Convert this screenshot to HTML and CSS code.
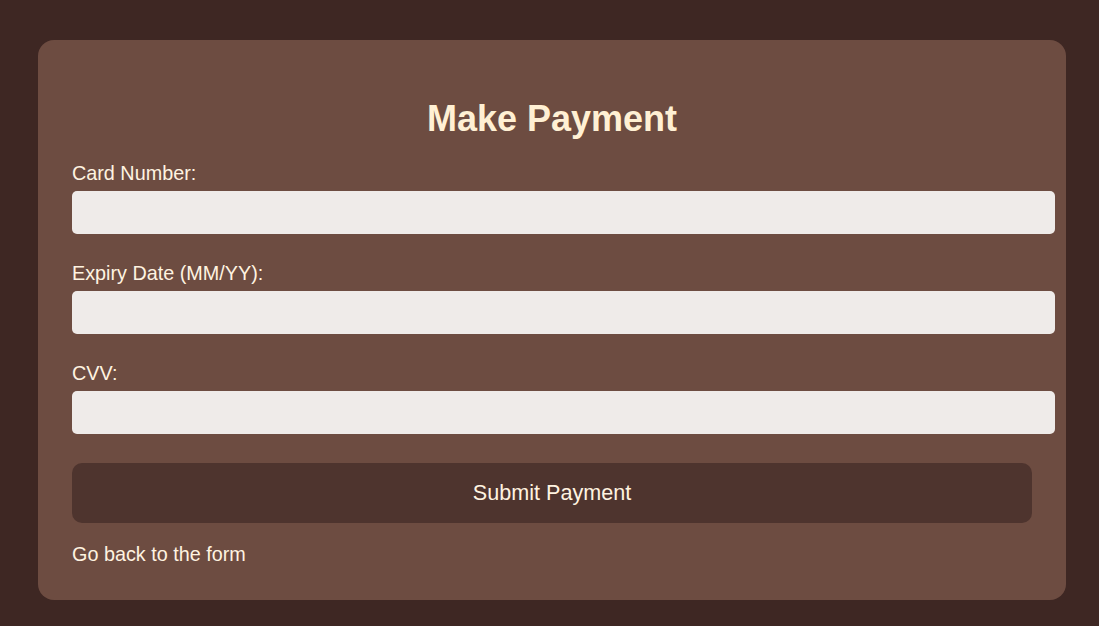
FILE: index.html
```html
<!DOCTYPE html>
<html lang="en">
<head>
<meta charset="utf-8">
<title>Make Payment</title>
<link rel="stylesheet" href="styles.css">
</head>
<body>
<main class="card">
  <h1 class="title">Make Payment</h1>
  <form class="form">
    <label class="label" for="card">Card Number:</label>
    <input class="input" id="card" type="text">
    <label class="label" for="expiry">Expiry Date (MM/YY):</label>
    <input class="input" id="expiry" type="text">
    <label class="label" for="cvv">CVV:</label>
    <input class="input" id="cvv" type="text">
    <button class="submit" type="submit">Submit Payment</button>
  </form>
  <a class="back" href="#">Go back to the form</a>
</main>
</body>
</html>
```
FILE: styles.css
```css
html, body {
  margin: 0;
  padding: 0;
  background: #3e2723;
  height: 100%;
}
body {
  font-family: "Liberation Sans", Arial, sans-serif;
  font-size: 18px;
  color: #fff3e0;
  padding-top: 40px;
  box-sizing: border-box;
}
.card {
  display: block;
  width: 960px;
  margin-left: 38px;
  padding: 34px;
  background: #6d4c41;
  border-radius: 16px;
}
.title {
  font-size: 36px;
  font-weight: bold;
  text-align: center;
  margin: 24px 0 23px;
  color: #fff0d4;
  line-height: 41px;
}
.form {
  display: flex;
  flex-direction: column;
  align-items: flex-start;
}
.label {
  font-size: 19.8px;
  line-height: 23px;
  margin-bottom: 6px;
}
.input {
  width: 960px;
  height: 21px;
  padding: 11px 12px 11px 11px;
  border: none;
  border-radius: 5px;
  background: #efebe9;
  font-size: 18px;
  font-family: inherit;
  margin: 0 0 28px 0;
}
.submit {
  width: 960px;
  height: 60px;
  margin-top: 1px;
  border: none;
  border-radius: 10px;
  background: #4e342e;
  color: #fff3e0;
  font-family: inherit;
  font-size: 21.6px;
}
.back {
  display: block;
  margin-top: 20px;
  font-size: 19.8px;
  line-height: 23px;
  color: #fff3e0;
  text-decoration: none;
}
```
